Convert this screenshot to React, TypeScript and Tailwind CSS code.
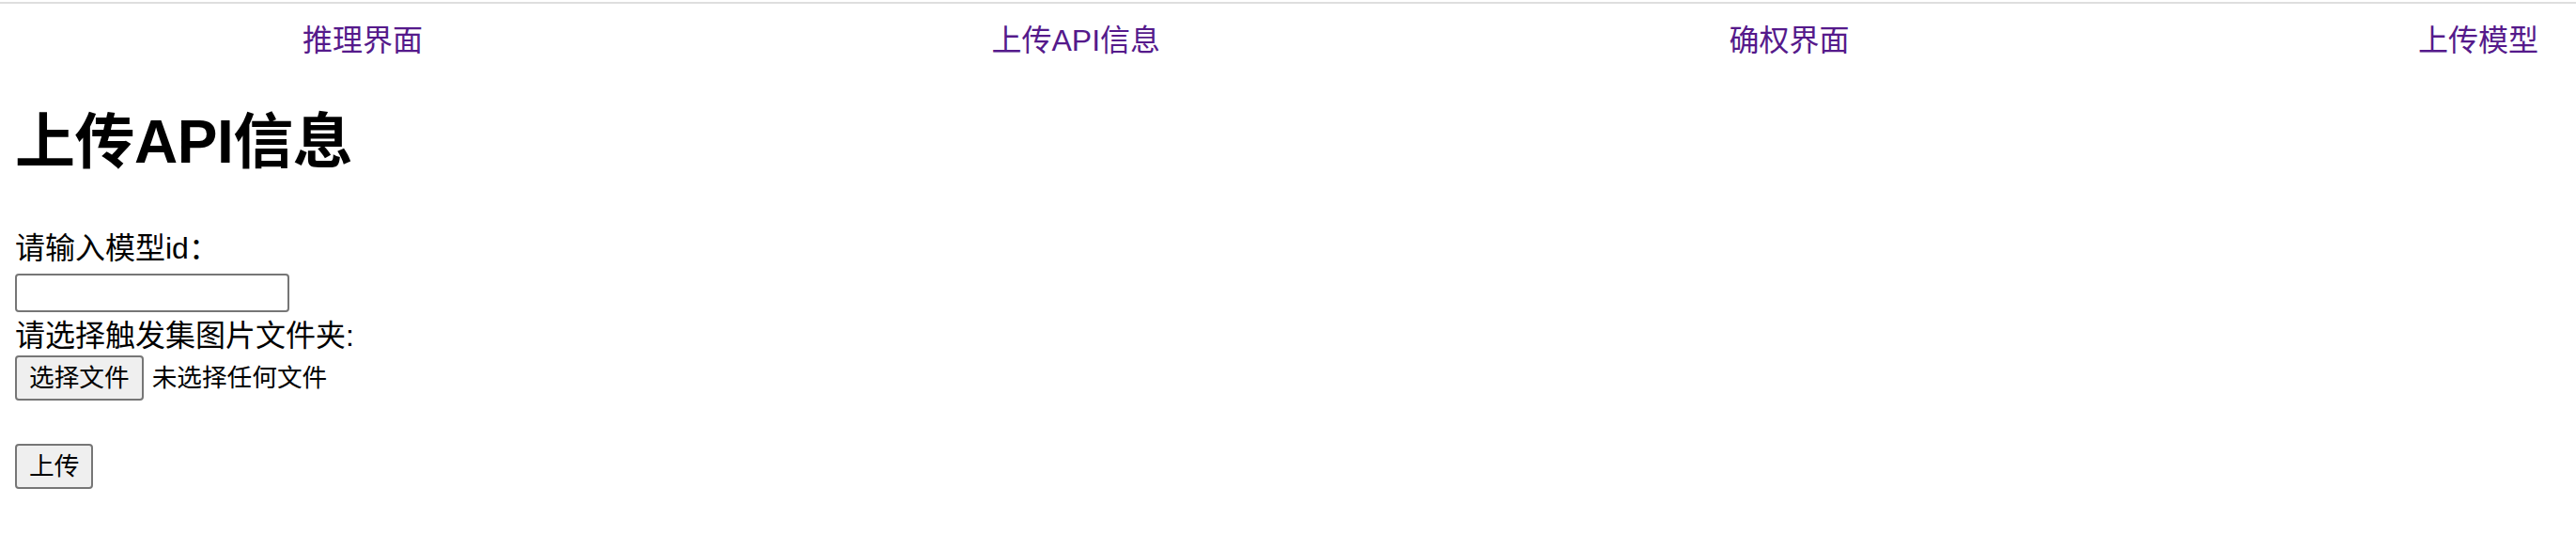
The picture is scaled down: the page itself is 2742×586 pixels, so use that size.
const font = "font-['Liberation_Sans','Noto_Sans_CJK_SC',sans-serif]"

const links = ['推理界面', '上传API信息', '确权界面', '上传模型']

function Btn({ children }: { children: React.ReactNode }) {
  return (
    <button className="h-[48px] px-[13px] border-2 border-[#767676] rounded-[4px] bg-[#efefef] text-[26.67px] leading-[34px] text-black">
      {children}
    </button>
  )
}

export default function App() {
  return (
    <div className={`min-h-screen bg-white text-black ${font}`}>
      <div className="pt-[2px]">
        <div className="h-[2px] bg-[#dedede]" />
      </div>

      <nav className="mt-[19px] flex justify-between pl-[322px] pr-[40px] text-[32px] leading-[40px] text-[#551a8b]">
        {links.map((l) => (
          <a key={l} href="#" className="whitespace-nowrap">
            {l}
          </a>
        ))}
      </nav>

      <main className="px-[16px]">
        <h1 className="mt-[48px] text-[64px] font-bold leading-[80px] tracking-[-0.5px]">上传API信息</h1>

        <div className="mt-[51px] text-[32px] leading-[44px]">请输入模型id：</div>
        <div className="pt-[5px]">
          <input
            type="text"
            className="block w-[292px] h-[41px] border-2 border-[#767676] rounded-[4px] bg-white"
          />
        </div>

        <div className="pt-[3px] text-[32px] leading-[44px]">请选择触发集图片文件夹:</div>
        <div className="-mt-[1px] flex items-center gap-[9px]">
          <Btn>选择文件</Btn>
          <span className="text-[26.67px] leading-[34px]">未选择任何文件</span>
        </div>

        <div className="mt-[46px]">
          <Btn>上传</Btn>
        </div>
      </main>
    </div>
  )
}
